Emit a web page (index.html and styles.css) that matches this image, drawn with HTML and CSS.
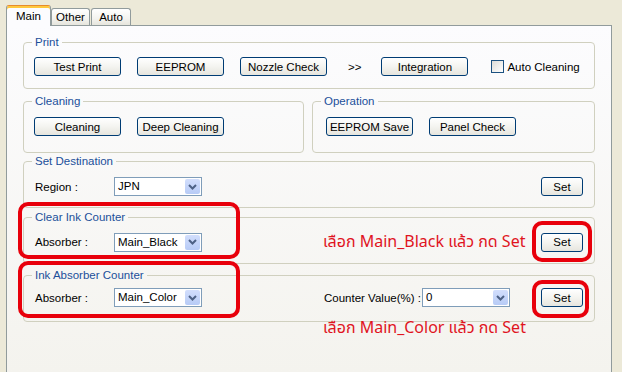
FILE: index.html
```html
<!DOCTYPE html>
<html lang="th">
<head>
    <meta charset="UTF-8">
    <title>Maintenance - Main</title>
    <link rel="stylesheet" href="styles.css">
</head>
<body>
    <div class="window">
        <!-- Tab strip -->
        <div class="tabs">
            <div class="tab active">Main</div>
            <div class="tab">Other</div>
            <div class="tab tab-auto">Auto</div>
        </div>

        <div class="page">
            <!-- Print -->
            <fieldset class="group group-print">
                <legend>Print</legend>
                <div class="row">
                    <button class="btn">Test Print</button>
                    <button class="btn gap">EEPROM</button>
                    <button class="btn gap">Nozzle Check</button>
                    <span class="arrow">&gt;&gt;</span>
                    <button class="btn">Integration</button>
                    <span class="check"></span>
                    <span class="check-label">Auto Cleaning</span>
                </div>
            </fieldset>

            <!-- Cleaning / Operation -->
            <div class="pair">
                <fieldset class="group group-cleaning">
                    <legend>Cleaning</legend>
                    <div class="row row-pair">
                        <button class="btn">Cleaning</button>
                        <button class="btn gap">Deep Cleaning</button>
                    </div>
                </fieldset>
                <fieldset class="group group-operation">
                    <legend>Operation</legend>
                    <div class="row row-pair">
                        <button class="btn">EEPROM Save</button>
                        <button class="btn gap">Panel Check</button>
                    </div>
                </fieldset>
            </div>

            <!-- Set Destination -->
            <fieldset class="group group-dest">
                <legend>Set Destination</legend>
                <div class="row row-field">
                    <span class="field-label">Region :</span>
                    <div class="combo"><span class="combo-text">JPN</span><span class="drop"><svg width="9" height="6" viewBox="0 0 9 6"><path d="M1 1 L4.5 4.5 L8 1" fill="none" stroke="#4d6185" stroke-width="2"/></svg></span></div>
                    <button class="btn btn-set">Set</button>
                </div>
            </fieldset>

            <!-- Clear Ink Counter -->
            <fieldset class="group group-clear">
                <legend>Clear Ink Counter</legend>
                <div class="row row-field">
                    <span class="field-label">Absorber :</span>
                    <div class="combo"><span class="combo-text">Main_Black</span><span class="drop"><svg width="9" height="6" viewBox="0 0 9 6"><path d="M1 1 L4.5 4.5 L8 1" fill="none" stroke="#4d6185" stroke-width="2"/></svg></span></div>
                    <span class="note note-inline">เลือก Main_Black แล้ว กด Set</span>
                    <button class="btn btn-set">Set</button>
                </div>
            </fieldset>

            <!-- Ink Absorber Counter -->
            <fieldset class="group group-absorber">
                <legend>Ink Absorber Counter</legend>
                <div class="row row-field">
                    <span class="field-label">Absorber :</span>
                    <div class="combo"><span class="combo-text">Main_Color</span><span class="drop"><svg width="9" height="6" viewBox="0 0 9 6"><path d="M1 1 L4.5 4.5 L8 1" fill="none" stroke="#4d6185" stroke-width="2"/></svg></span></div>
                    <span class="counter-label">Counter Value(%) :</span>
                    <div class="combo"><span class="combo-text">0</span><span class="drop"><svg width="9" height="6" viewBox="0 0 9 6"><path d="M1 1 L4.5 4.5 L8 1" fill="none" stroke="#4d6185" stroke-width="2"/></svg></span></div>
                    <button class="btn btn-set">Set</button>
                </div>
            </fieldset>

            <div class="note note-below">เลือก Main_Color แล้ว กด Set</div>
        </div>

        <!-- red annotation marks -->
        <div class="mark mark-clear"></div>
        <div class="mark mark-absorber"></div>
        <div class="mark mark-set1"></div>
        <div class="mark mark-set2"></div>
    </div>
</body>
</html>
```

FILE: styles.css
```css
/* XP style maintenance window */
body {
    margin: 0;
    background-color: #ece9d8;
    font-family: "Liberation Sans", Arial, sans-serif;
    font-size: 11.5px;
    color: #000;
    overflow: hidden;
}

.window {
    position: relative;
    width: 622px;
    height: 372px;
}

/* Tabs */
.tabs {
    display: flex;
    align-items: flex-end;
    height: 25px;
    padding-left: 6px;
}

.tab {
    box-sizing: border-box;
    height: 17px;
    width: 39px;
    border: 1px solid #919b9c;
    border-bottom: none;
    border-radius: 3px 3px 0 0;
    background: linear-gradient(#ffffff, #f3f3ef 60%, #e6e5dd);
    line-height: 16px;
    text-align: center;
}

.tab-auto {
    margin-left: 1px;
    width: 40px;
}

.tab.active {
    position: relative;
    z-index: 1;
    width: 45px;
    height: 21px;
    margin-bottom: -1px;
    background: #fcfcfe;
    border-top: 1px solid #e68b2c;
    box-shadow: inset 0 2px 0 #ffc83c;
    line-height: 20px;
}

/* Tab page */
.page {
    box-sizing: border-box;
    margin-left: 6px;
    width: 606px;
    height: 347px;
    border: 1px solid #919b9c;
    border-bottom: none;
    padding: 0 16px;
    background: linear-gradient(#fcfcfe, #f4f3ee);
}

/* Group boxes */
.group {
    box-sizing: border-box;
    margin: 0;
    padding: 0;
    min-width: 0;
    border: 1px solid #d0d0bf;
    border-radius: 4px;
}

.group legend {
    margin-left: 8px;
    padding: 0 3px;
    line-height: 14px;
    color: #1b4f9a;
}

.group-print {
    margin-top: 9px;
}

.pair {
    display: flex;
    gap: 8px;
    margin-top: 5px;
}

.group-cleaning {
    width: 281px;
    flex: none;
}

.group-operation {
    flex: 1;
}

.group-dest {
    margin-top: 1px;
}

.group-clear {
    margin-top: 2px;
}

.group-absorber {
    margin-top: 4px;
}

/* Rows inside the groups */
.row {
    display: flex;
    align-items: center;
    padding: 8px 11px 12px 10px;
    white-space: nowrap;
}

.row-pair {
    padding-top: 9px;
    padding-bottom: 16px;
}

.group-operation .row {
    padding-left: 13px;
}

.group-dest .row {
    padding-top: 9px;
    padding-bottom: 11px;
}

.group-clear .row {
    padding-top: 8px;
    padding-bottom: 11px;
}

.group-absorber .row {
    padding-top: 6px;
    padding-bottom: 14px;
}

/* Buttons */
.btn {
    box-sizing: border-box;
    width: 87px;
    height: 19px;
    padding: 0;
    border: 1px solid #003c74;
    border-radius: 3px;
    background: linear-gradient(#ffffff, #f4f4f0 50%, #e6e5de);
    font-family: "Liberation Sans", Arial, sans-serif;
    font-size: 11.5px;
    color: #000;
}

.btn.gap {
    margin-left: 16px;
}

.btn-set {
    width: 42px;
    margin-left: auto;
}

.arrow {
    margin-left: 21px;
    margin-right: 20px;
}

.check {
    box-sizing: border-box;
    width: 13px;
    height: 13px;
    margin-left: 23px;
    border: 1px solid #1c5180;
    background: linear-gradient(135deg, #dcdcd7, #ffffff);
}

.check-label {
    margin-left: 3px;
}

/* Fields */
.field-label {
    width: 79px;
    padding-left: 1px;
}

.counter-label {
    width: 98px;
    margin-left: 122px;
}

.combo {
    box-sizing: border-box;
    display: flex;
    width: 88px;
    height: 19px;
    border: 1px solid #7f9db9;
    background: #fff;
}

.combo-text {
    flex: 1;
    padding-left: 3px;
    line-height: 17px;
}

.drop {
    display: flex;
    align-items: center;
    justify-content: center;
    width: 15px;
    height: 15px;
    margin: 1px;
    border-radius: 2px;
    background: linear-gradient(#d2defc, #b7cbf6);
}

/* Red notes */
.note {
    font-family: "Noto Sans Thai", Tahoma, "DejaVu Sans", sans-serif;
    font-size: 16px;
    line-height: 20px;
    color: #e0141e;
    white-space: nowrap;
}

.note-inline {
    margin-left: 121px;
}

.note-below {
    margin-left: 300px;
    margin-top: -4px;
}

.mark {
    position: absolute;
    box-sizing: border-box;
    border: 4px solid #e8000b;
    border-radius: 10px;
}

.mark-clear {
    left: 18px;
    top: 202px;
    width: 222px;
    height: 57px;
}

.mark-absorber {
    left: 18px;
    top: 261px;
    width: 222px;
    height: 57px;
}

.mark-set1 {
    left: 532px;
    top: 221px;
    width: 60px;
    height: 41px;
}

.mark-set2 {
    left: 532px;
    top: 280px;
    width: 57px;
    height: 38px;
}
```
